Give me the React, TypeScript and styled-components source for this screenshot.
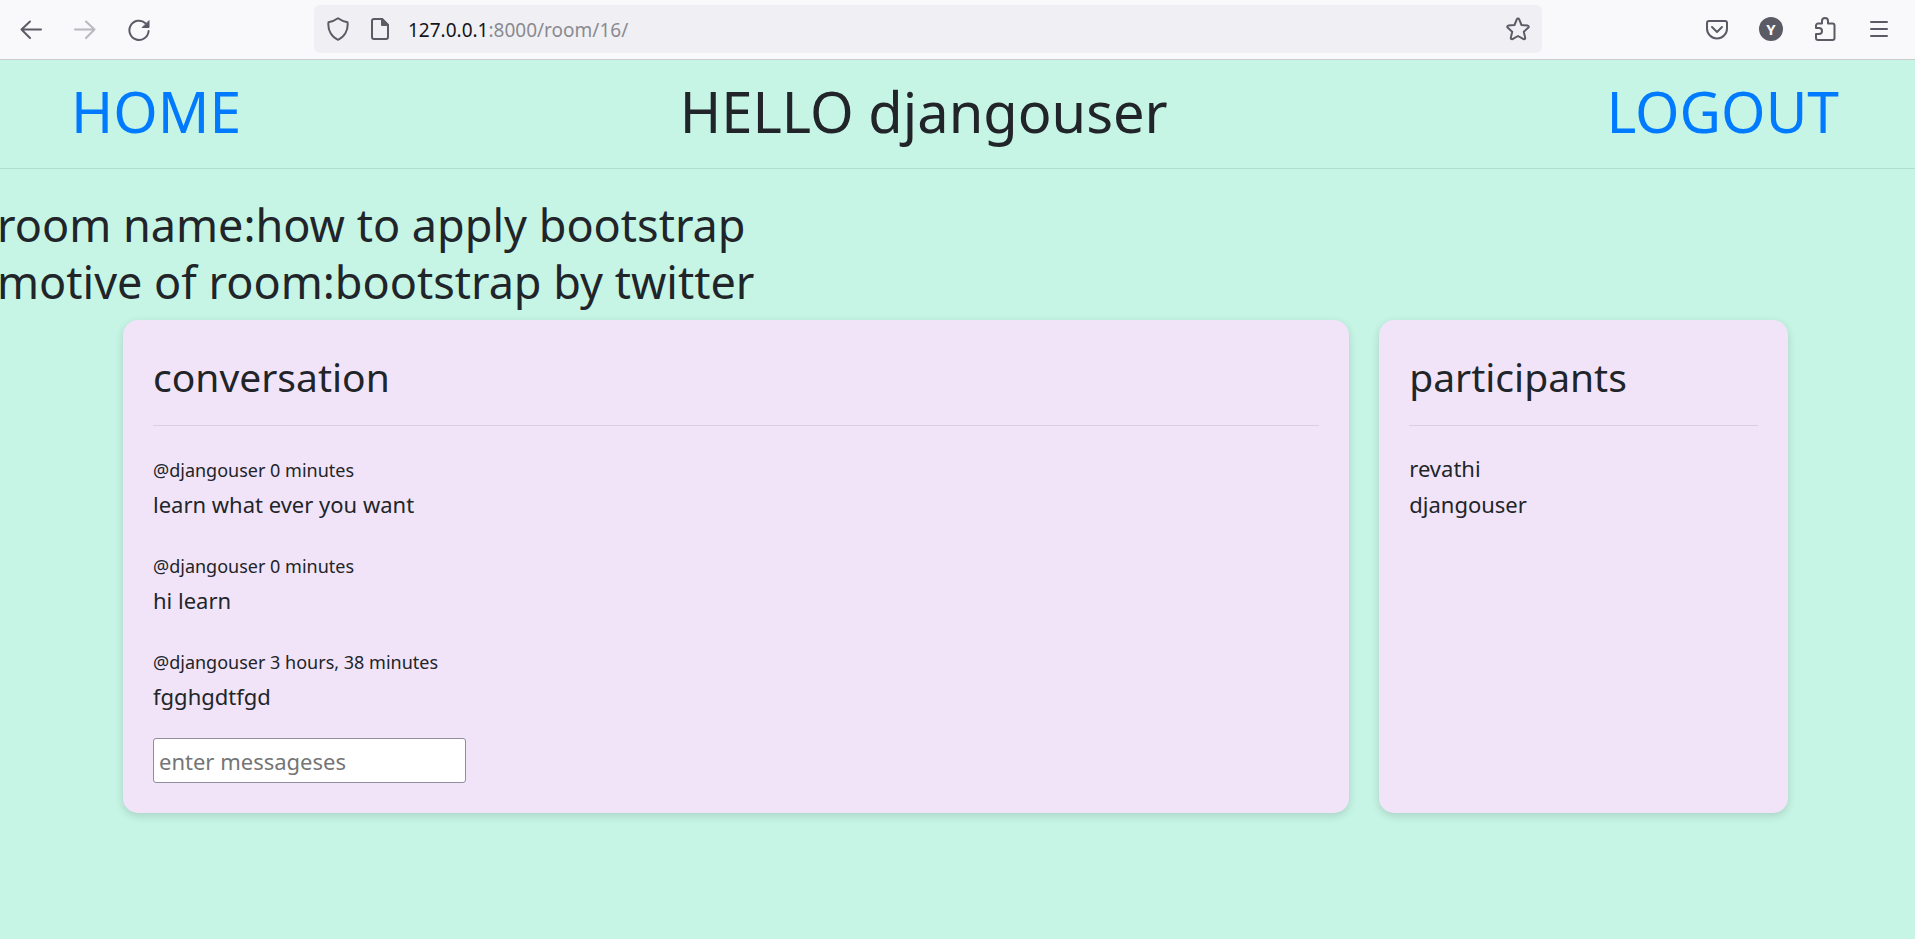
import React from 'react';
import styled, { createGlobalStyle } from 'styled-components';

const GlobalStyle = createGlobalStyle`
  *, *::before, *::after { box-sizing: border-box; }
  html, body, #root { min-height: 100vh; }
  body {
    margin: 0;
    background: #c6f5e5;
    color: #212529;
    font-family: 'Noto Sans', 'Open Sans', sans-serif;
    font-size: 22px;
    line-height: 36px;
    overflow-x: hidden;
  }
  h1, h2, h3, p, ul { margin: 0; padding: 0; font-weight: 400; }
`;

const Toolbar = styled.header`
  display: flex;
  align-items: center;
  justify-content: space-between;
  height: 60px;
  padding: 0 21px 1px 16px;
  background: #f9f9fb;
  border-bottom: 1px solid #cccccc;
`;

const ToolGroup = styled.div`
  display: flex;
  gap: 24px;
`;

const ToolButton = styled.button<{ $faded?: boolean }>`
  display: flex;
  align-items: center;
  justify-content: center;
  width: 30px;
  height: 30px;
  padding: 0;
  border: 0;
  background: none;
  color: #5b5b66;
  opacity: ${(p) => (p.$faded ? 0.4 : 1)};
`;

const Avatar = styled.span`
  width: 24px;
  height: 24px;
  border-radius: 50%;
  background: #5b5b66;
  color: #f9f9fb;
  font: 700 15px/24px 'Noto Sans', 'Open Sans', sans-serif;
  text-align: center;
`;

const AddressBar = styled.div`
  display: flex;
  align-items: center;
  flex: 0 1 1228px;
  height: 48px;
  padding: 0 9px;
  gap: 12px;
  border-radius: 6px;
  background: #f0f0f4;
`;

const Address = styled.p`
  flex: 1;
  padding: 2px 0 0 1px;
  font-size: 19px;
  line-height: 30px;
  color: #8a8a90;
`;

const Host = styled.span`
  color: #15141a;
`;

const Nav = styled.nav`
  display: flex;
  justify-content: space-between;
  padding: 15px 76px 21px 71px;
  border-bottom: 1px solid #b2dcce;
  font-size: 57px;
  line-height: 72px;
`;

const NavLink = styled.a`
  color: #007bff;
  text-decoration: none;
`;

const Greeting = styled.h1`
  font-size: 56px;
`;

const RoomInfo = styled.section`
  margin: 27px 0 10px -3px;
`;

const RoomLine = styled.h2`
  font-size: 45px;
  line-height: 57px;
`;

const Columns = styled.main`
  display: grid;
  grid-template-columns: 3fr 1fr;
  gap: 30px;
  padding: 0 127px 48px 123px;
`;

const Card = styled.section`
  padding: 30px;
  border-radius: 15px;
  background: #f1e4f8;
  box-shadow: 0 3px 9px rgba(0, 0, 0, 0.14);
`;

const CardTitle = styled.h3`
  padding: 2px 0 23px;
  border-bottom: 1px solid #d8cfe2;
  margin-bottom: 24px;
  font-size: 39px;
  line-height: 50px;
`;

const Message = styled.article`
  margin-bottom: 24px;
`;

const Meta = styled.p`
  padding-top: 4px;
  font-size: 18px;
  line-height: 32px;
`;

const MessageInput = styled.input`
  display: block;
  width: 313px;
  height: 45px;
  padding: 2px 5px;
  border: 1px solid #8f8f9d;
  border-radius: 3px;
  background: #ffffff;
  font: inherit;
  &::placeholder { color: #757575; opacity: 1; }
`;

const People = styled.ul`
  list-style: none;
`;

const Icon = ({ children }: { children: React.ReactNode }) => (
  <svg width="24" height="24" viewBox="0 0 24 24" fill="none" stroke="currentColor" strokeWidth="2" strokeLinecap="round" strokeLinejoin="round" aria-hidden="true">
    {children}
  </svg>
);

const messages = [
  { user: 'djangouser', age: '0 minutes', body: 'learn what ever you want' },
  { user: 'djangouser', age: '0 minutes', body: 'hi learn' },
  { user: 'djangouser', age: '3 hours, 38 minutes', body: 'fgghgdtfgd' },
];

const participants = ['revathi', 'djangouser'];

export default function App() {
  return (
    <>
      <GlobalStyle />
      <Toolbar>
        <ToolGroup>
          <ToolButton aria-label="Back">
            <Icon><path d="M22 12.500H2.500M11 4.500l-8.500 8 8.500 8.500" /></Icon>
          </ToolButton>
          <ToolButton aria-label="Forward" $faded>
            <Icon><path d="M2 12.500h19.500M13 4.500l8.500 8-8.500 8.500" /></Icon>
          </ToolButton>
          <ToolButton aria-label="Reload">
            <Icon>
              <path d="M18.500 6.200A9.600 9.600 0 1 0 21.600 14" />
              <path d="M22 4v6.500h-6.500z" fill="currentColor" strokeWidth="1" />
            </Icon>
          </ToolButton>
        </ToolGroup>
        <AddressBar>
          <ToolButton aria-label="Tracking protection">
            <Icon><path d="M12 1.200C14.500 3 18 4.500 21.500 5.200C22.500 13 18.500 20 12 22.800C5.500 20 1.500 13 2.500 5.200C6 4.500 9.500 3 12 1.200z" /></Icon>
          </ToolButton>
          <ToolButton aria-label="Site information">
            <Icon>
              <path d="M14 2H6a2 2 0 0 0-2 2v16a2 2 0 0 0 2 2h12a2 2 0 0 0 2-2V8z" />
              <path d="M14 2v6h6z" fill="currentColor" />
            </Icon>
          </ToolButton>
          <Address><Host>127.0.0.1</Host>:8000/room/16/</Address>
          <ToolButton aria-label="Bookmark this page">
            <Icon><path d="M10.900 2.200a1.200 1.200 0 0 1 2.200 0L15.500 8l6.300.6a1.200 1.200 0 0 1 .6 2L17.800 14.700l1.400 6.200a1.200 1.200 0 0 1-1.700 1.300L12 19l-5.500 3.200a1.200 1.200 0 0 1-1.700-1.300l1.400-6.200L1.600 10.600a1.200 1.200 0 0 1 .6-2L8.500 8z" /></Icon>
          </ToolButton>
        </AddressBar>
        <ToolGroup>
          <ToolButton aria-label="Save to Pocket">
            <Icon>
              <path d="M4 4h16a2 2 0 0 1 2 2v5.500a10 10 0 0 1-20 0V6a2 2 0 0 1 2-2z" />
              <path d="M7 10l5 5 5-5" />
            </Icon>
          </ToolButton>
          <ToolButton aria-label="Account">
            <Avatar>Y</Avatar>
          </ToolButton>
          <ToolButton aria-label="Extensions">
            <Icon><path d="M3 11V8.500a2 2 0 0 1 2-2h4V4a3 3 0 0 1 6 0v2.500h4.500a2 2 0 0 1 2 2v12.500a2 2 0 0 1-2 2H5a2 2 0 0 1-2-2v-4h3a3 3 0 0 0 0-6z" /></Icon>
          </ToolButton>
          <ToolButton aria-label="Open menu">
            <Icon><path d="M4 5h16M4 12h16M4 19h16" /></Icon>
          </ToolButton>
        </ToolGroup>
      </Toolbar>
      <Nav>
        <NavLink href="/">HOME</NavLink>
        <Greeting>HELLO djangouser</Greeting>
        <NavLink href="/logout/">LOGOUT</NavLink>
      </Nav>
      <RoomInfo>
        <RoomLine>room name:how to apply bootstrap</RoomLine>
        <RoomLine>motive of room:bootstrap by twitter</RoomLine>
      </RoomInfo>
      <Columns>
        <Card>
          <CardTitle>conversation</CardTitle>
          {messages.map((m, i) => (
            <Message key={i}>
              <Meta>@{m.user} {m.age}</Meta>
              <p>{m.body}</p>
            </Message>
          ))}
          <form>
            <MessageInput type="text" name="body" aria-label="Message" placeholder="enter messageses" />
          </form>
        </Card>
        <Card>
          <CardTitle>participants</CardTitle>
          <People>
            {participants.map((name) => <li key={name}>{name}</li>)}
          </People>
        </Card>
      </Columns>
    </>
  );
}
